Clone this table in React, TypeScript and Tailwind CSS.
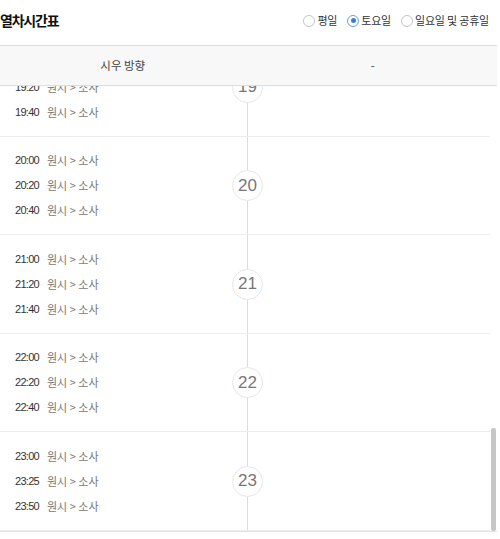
import React, { useEffect, useRef, useState } from 'react'

const FONT = { fontFamily: '"Noto Sans CJK KR", "Liberation Sans", sans-serif' }
const LATIN = { fontFamily: '"Liberation Sans", sans-serif' }

type Group = { hour: number; times: string[] }

// hours 5 to 23, rush hours run every 15 minutes
const groups: Group[] = Array.from({ length: 19 }, (_, i) => {
  const hour = i + 5
  const hh = String(hour).padStart(2, '0')
  if (hour === 7 || hour === 8) {
    return { hour, times: ['00', '15', '30', '45'].map((m) => `${hh}:${m}`) }
  }
  if (hour === 23) {
    return { hour, times: ['23:00', '23:25', '23:50'] }
  }
  return { hour, times: ['00', '20', '40'].map((m) => `${hh}:${m}`) }
})

function Radio({ label, checked }: { label: string; checked?: boolean }) {
  return (
    <label className="flex items-center gap-[2px] text-[11px] tracking-[-0.2px] text-[#333]">
      <span
        className={
          'flex h-[12px] w-[12px] items-center justify-center rounded-full border bg-white ' +
          (checked ? 'border-[#6a9fd8]' : 'border-[#c4c4c4]')
        }
      >
        {checked && <span className="h-[5px] w-[5px] rounded-full bg-[#3a7fd0]" />}
      </span>
      <span>{label}</span>
    </label>
  )
}

function HourGroup({ group }: { group: Group }) {
  // odd hours sit one pixel taller, as the original rounds half pixels
  const odd = group.hour % 2 === 1
  return (
    <div className="flex border-b border-[#ececec]">
      {/* departures */}
      <div className={'w-[232px] pb-[11px] ' + (odd ? 'pt-[12px]' : 'pt-[11px]')}>
        {group.times.map((t) => (
          <div key={t} className="flex h-[25px] items-center pl-[15px] text-[11px]">
            <span className="w-[32px] tracking-[-0.7px] text-[#333]" style={LATIN}>
              {t}
            </span>
            <span className="text-[#777]">원시 &gt; 소사</span>
          </div>
        ))}
      </div>
      {/* timeline */}
      <div className="flex w-[31px] flex-col items-center">
        <div className="w-px flex-1 bg-[#dcdcdc]" />
        <div
          className="flex h-[31px] w-[31px] items-center justify-center rounded-full border border-[#e6e6e6] bg-white text-[17px] text-[#777]"
          style={LATIN}
        >
          {group.hour}
        </div>
        <div className="w-px flex-1 bg-[#dcdcdc]" />
      </div>
      <div className="flex-1" />
    </div>
  )
}

export default function App() {
  const listRef = useRef<HTMLDivElement>(null)
  const [thumb, setThumb] = useState({ top: 0, height: 0 })

  const measure = () => {
    const el = listRef.current
    if (!el) return
    const track = el.clientHeight
    setThumb({
      top: (el.scrollTop / el.scrollHeight) * track,
      height: (el.clientHeight / el.scrollHeight) * track,
    })
  }

  useEffect(() => {
    if (listRef.current) listRef.current.scrollTop = listRef.current.scrollHeight
    measure()
  }, [])

  return (
    <div className="h-[539px] w-[500px] overflow-hidden bg-white" style={FONT}>
      <div className="flex h-[45px] items-center justify-between pb-[4px] pr-[11px]">
        <h2 className="text-[14px] font-bold tracking-[-1.2px] text-[#111]">열차시간표</h2>
        <div className="flex items-center gap-[10px]">
          <Radio label="평일" />
          <Radio label="토요일" checked />
          <Radio label="일요일 및 공휴일" />
        </div>
      </div>

      <div className="w-[497px] border-b border-[#e3e3e3]">
        <div className="grid h-[41px] grid-cols-2 border-y border-[#dedede] bg-[#f8f8f8] text-[11.5px] text-[#444]">
          <div className="flex items-center justify-center pr-[3px]">시우 방향</div>
          <div className="flex items-center justify-center">-</div>
        </div>
        <div className="flex h-[445px]">
          <div
            ref={listRef}
            onScroll={measure}
            className="w-[490px] overflow-y-scroll [scrollbar-width:none] [&::-webkit-scrollbar]:hidden"
          >
            {groups.map((g) => (
              <HourGroup key={g.hour} group={g} />
            ))}
          </div>
          {/* scrollbar track */}
          <div className="flex w-[7px] flex-col items-center">
            <div style={{ height: thumb.top }} />
            <div className="w-[5px] rounded-[2px] bg-[#c6c6c6]" style={{ height: thumb.height }} />
          </div>
        </div>
      </div>
    </div>
  )
}
